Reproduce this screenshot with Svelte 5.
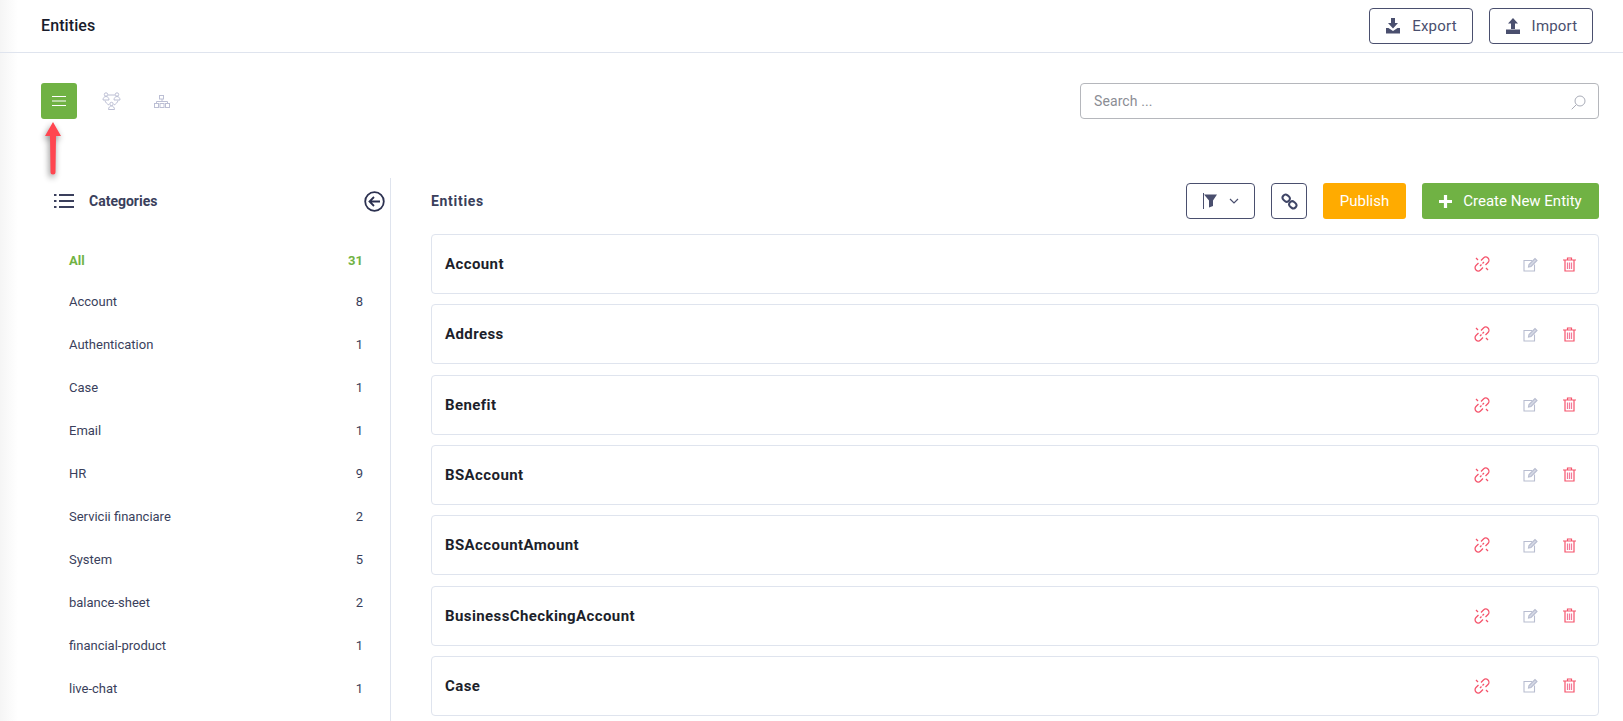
<script>
    const categories = [
        { name: 'All', count: 31, active: true },
        { name: 'Account', count: 8 },
        { name: 'Authentication', count: 1 },
        { name: 'Case', count: 1 },
        { name: 'Email', count: 1 },
        { name: 'HR', count: 9 },
        { name: 'Servicii financiare', count: 2 },
        { name: 'System', count: 5 },
        { name: 'balance-sheet', count: 2 },
        { name: 'financial-product', count: 1 },
        { name: 'live-chat', count: 1 }
    ];

    const entities = ['Account', 'Address', 'Benefit', 'BSAccount', 'BSAccountAmount', 'BusinessCheckingAccount', 'Case'];
</script>

<div class="page">
    <header class="topbar">
        <h1>Entities</h1>
        <div class="top-actions">
            <button class="outline io">
                <svg width="16" height="16" viewBox="0 0 16 16"><path d="M6 0h4v5h3l-5 5.500L3 5h3z" fill="#4a4f6e"/><path d="M1 10h2.500L8 13l4.500-3H15v5.500H1z" fill="#4a4f6e"/></svg>
                Export
            </button>
            <button class="outline io">
                <svg width="16" height="16" viewBox="0 0 16 16"><path d="M6 11V5.500H3L8 0l5 5.500h-3V11z" fill="#4a4f6e"/><path d="M1 11.500h14v4.500H1z" fill="#4a4f6e"/></svg>
                Import
            </button>
        </div>
    </header>

    <div class="toolbar">
        <div class="views">
            <button class="view active" aria-label="List view">
                <svg width="14" height="10" viewBox="0 0 14 10"><path d="M0 .5h14M0 5h14M0 9.500h14" stroke="#fff" stroke-width="1"/></svg>
            </button>
            <span class="view-icon">
                <svg width="19" height="18" viewBox="0 0 19 18" fill="none" stroke="#bcbfd4" stroke-width="1"><circle cx="4" cy="2.500" r="1.700"/><circle cx="15" cy="2.500" r="1.700"/><circle cx="9.500" cy="12" r="1.700"/><path d="M1 8c0-2 1.200-3.500 3-3.500S7 6 7 8zM12 8c0-2 1.200-3.500 3-3.500S18 6 18 8zM6.500 17.500c0-2 1.300-3.500 3-3.500s3 1.500 3 3.500zM6 3h7M3 8.500c.5 2 2 3.500 4 4.500M16 8.500c-.5 2-2 3.500-4 4.500"/></svg>
            </span>
            <span class="view-icon">
                <svg width="16" height="13" viewBox="0 0 16 13" fill="none" stroke="#bcbfd4" stroke-width="1"><rect x="5.500" y=".5" width="4" height="3.500"/><rect x=".5" y="8.500" width="4" height="4"/><rect x="6" y="8.500" width="4" height="4"/><rect x="11.500" y="8.500" width="4" height="4"/><path d="M8 4v2.500M2.500 8.500v-2h11v2"/></svg>
            </span>
        </div>
        <label class="search">
            <input type="text" placeholder="Search ..." />
            <svg width="15" height="15" viewBox="0 0 15 15" fill="none" stroke="#a9acb8" stroke-width="1"><circle cx="9" cy="6" r="5"/><path d="M5.300 9.700L.7 14.300"/></svg>
        </label>
    </div>

    <div class="content">
        <aside class="sidebar">
            <div class="side-head">
                <svg width="20" height="14" viewBox="0 0 20 14" fill="none" stroke="#3a3f5c" stroke-width="2"><path d="M0 1h2.500M0 7h2.500M0 13h2.500M5 1h15M5 7h15M5 13h15"/></svg>
                <span class="side-title">Categories</span>
                <svg class="collapse" width="21" height="21" viewBox="0 0 21 21" fill="none" stroke="#2c3150" stroke-width="1.800"><circle cx="10.500" cy="10.500" r="9.300"/><path d="M16 10.500H5.500M10 6l-4.500 4.500L10 15"/></svg>
            </div>
            <ul>
                {#each categories as c}
                    <li class:active={c.active}><span>{c.name}</span><span>{c.count}</span></li>
                {/each}
            </ul>
        </aside>

        <main class="main">
            <div class="main-head">
                <h2>Entities</h2>
                <div class="main-actions">
                    <button class="outline filter" aria-label="Filter">
                        <svg width="15" height="16" viewBox="0 0 15 16"><path d="M.5 0v16" stroke="#4a4f6e" stroke-width="1"/><path d="M1 1.500h13L10 7.500V13l-4 1.500v-7z" fill="#4a4f6e"/></svg>
                        <svg width="10" height="6" viewBox="0 0 10 6" fill="none" stroke="#4a4f6e" stroke-width="1.200"><path d="M1 1l4 4 4-4"/></svg>
                    </button>
                    <button class="outline square" aria-label="Link">
                        <svg width="17" height="17" viewBox="0 0 17 17" fill="none" stroke="#3f4566" stroke-width="2"><rect x="1.500" y="2" width="7.500" height="6" rx="3" transform="rotate(40 5 5)"/><rect x="8" y="9" width="7.500" height="6" rx="3" transform="rotate(40 12 12)"/></svg>
                    </button>
                    <button class="publish">Publish</button>
                    <button class="create">
                        <svg width="13" height="13" viewBox="0 0 13 13"><path d="M6.500 0v13M0 6.500h13" stroke="#fff" stroke-width="3.200"/></svg>
                        Create New Entity
                    </button>
                </div>
            </div>

            <div class="cards">
                {#each entities as name}
                    <div class="card">
                        <span class="name">{name}</span>
                        <div class="row-actions">
                            <svg width="16" height="16" viewBox="0 0 16 16" fill="none" stroke="#f5536b" stroke-width="1.300"><path d="M7 4.500L9.500 2a3 3 0 0 1 4.500 4.500L11.500 9M9 11.500L6.500 14A3 3 0 0 1 2 9.500L4.500 7M10 6L8.500 7.500M7.500 8.500L6 10M2 2l2 2M12 12l2 2"/></svg>
                            <svg class="edit" width="15" height="15" viewBox="0 0 15 15" fill="none" stroke="#b8bdd0" stroke-width="1.100"><path d="M11.500 7.500v6.500H1V3.500h8"/><path d="M5.500 10l.5-2.500L12 1.500l2 2L8 9.500z" fill="#d5d8e5"/></svg>
                            <svg class="trash" width="13" height="15" viewBox="0 0 13 15" fill="none" stroke="#f5536b" stroke-width="1.200"><path d="M0 3h13M4.500 3V1h4v2M2 3v11h9V3"/><path d="M4.500 5.500v6.500M6.500 5.500v6.500M8.500 5.500v6.500" stroke="#f4799a"/></svg>
                        </div>
                    </div>
                {/each}
            </div>
        </main>
    </div>

    <svg class="arrow" width="30" height="56" viewBox="0 0 30 56">
        <path d="M15 0l8 14h-5l-.5 36a2.500 2.500 0 0 1-5 0l-.5-36H7z" fill="#ff4650"/>
    </svg>
</div>

<style>
    :global(body) {
        margin: 0;
        font-family: Roboto, "Liberation Sans", sans-serif;
        color: #2b2f45;
        background: #fff;
    }

    .page {
        position: relative;
        height: 721px;
        overflow: hidden;
        background: linear-gradient(to right, #f5f5f5 0, #fff 18px);
    }

    button {
        font-family: inherit;
        cursor: pointer;
    }

    .topbar {
        height: 53px;
        box-sizing: border-box;
        border-bottom: 1px solid #dfe4ee;
        padding: 8px 30px 0 41px;
        display: flex;
        justify-content: space-between;
    }

    h1 {
        margin: 9px 0 0;
        font-size: 16px;
        font-weight: 500;
        letter-spacing: .1px;
        line-height: 18px;
        color: #191c2c;
    }

    .top-actions {
        display: flex;
        gap: 16px;
    }

    .outline {
        height: 36px;
        background: #fff;
        border: 1px solid #4a4f6e;
        border-radius: 4px;
        color: #4a4f6e;
        display: flex;
        align-items: center;
        justify-content: center;
    }

    .io {
        width: 104px;
        gap: 11px;
        font-size: 15px;
        letter-spacing: .2px;
        padding: 0;
    }

    .toolbar {
        display: flex;
        justify-content: space-between;
        padding: 30px 24px 0 41px;
    }

    .views {
        display: flex;
        align-items: center;
    }

    .view {
        width: 36px;
        height: 36px;
        border: 0;
        padding: 0;
        border-radius: 3px;
        background: #70b244;
        display: flex;
        align-items: center;
        justify-content: center;
    }

    .view-icon {
        display: flex;
        margin-left: 25px;
    }

    .view-icon + .view-icon {
        margin-left: 33px;
    }

    .search {
        width: 519px;
        height: 36px;
        box-sizing: border-box;
        border: 1px solid #b5b7bc;
        border-radius: 4px;
        padding: 0 12px 0 13px;
        display: flex;
        align-items: center;
    }

    .search input {
        flex: 1;
        border: 0;
        outline: 0;
        padding: 0;
        background: none;
        font: 14px Roboto, sans-serif;
        letter-spacing: .1px;
    }

    .search input::placeholder {
        color: #8b8d94;
        opacity: 1;
    }

    .search svg {
        margin-top: 3px;
    }

    .content {
        display: flex;
        margin-top: 59px;
        padding-right: 24px;
    }

    .sidebar {
        width: 391px;
        flex: none;
        box-sizing: border-box;
        border-right: 1px solid #dfe4ee;
        padding: 0 5px 0 54px;
        height: 543px;
    }

    .side-head {
        height: 46px;
        display: flex;
        align-items: center;
    }

    .side-title {
        margin-left: 15px;
        font-size: 14px;
        font-weight: 700;
        color: #3a3f5c;
    }

    .collapse {
        margin-left: auto;
    }

    ul {
        list-style: none;
        margin: 17.5px 0 0;
        padding: 0 22px 0 15px;
    }

    li {
        height: 43px;
        display: flex;
        align-items: center;
        justify-content: space-between;
        font-size: 13px;
        color: #3a3f5c;
    }

    li.active {
        height: 38px;
        color: #70b244;
        font-weight: 700;
    }

    .main {
        flex: 1;
        padding-left: 40px;
    }

    .main-head {
        height: 56px;
        padding-top: 5px;
        box-sizing: border-box;
        display: flex;
        justify-content: space-between;
    }

    h2 {
        margin: 0;
        align-self: center;
        padding-bottom: 16px;
        font-size: 14px;
        font-weight: 700;
        letter-spacing: .7px;
        color: #3a3f5c;
    }

    .main-actions {
        display: flex;
        gap: 16px;
    }

    .filter {
        width: 69px;
        gap: 11px;
        padding: 0 0 0 1px;
    }

    .square {
        width: 36px;
        padding: 0;
    }

    .publish,
    .create {
        height: 36px;
        border: 0;
        border-radius: 3px;
        color: #fff;
        font-size: 15px;
    }

    .publish {
        width: 83px;
        background: #ffab00;
    }

    .create {
        width: 177px;
        background: #70b244;
        display: flex;
        align-items: center;
        justify-content: center;
        gap: 11px;
        padding: 0;
    }

    .cards {
        display: flex;
        flex-direction: column;
        gap: 10.33px;
    }

    .card {
        height: 60px;
        box-sizing: border-box;
        border: 1px solid #dfe4ee;
        border-radius: 4px;
        padding: 0 22px 0 13px;
        display: flex;
        align-items: center;
        justify-content: space-between;
        flex: none;
    }

    .name {
        font-size: 15px;
        font-weight: 700;
        letter-spacing: .4px;
        color: #1d1f2b;
    }

    .row-actions {
        display: flex;
        align-items: center;
    }

    .edit {
        margin-left: 33px;
    }

    .trash {
        margin-left: 25px;
    }

    .arrow {
        position: absolute;
        left: 38px;
        top: 122px;
        filter: drop-shadow(-1px 3px 3px rgba(0, 0, 0, .45));
    }
</style>
